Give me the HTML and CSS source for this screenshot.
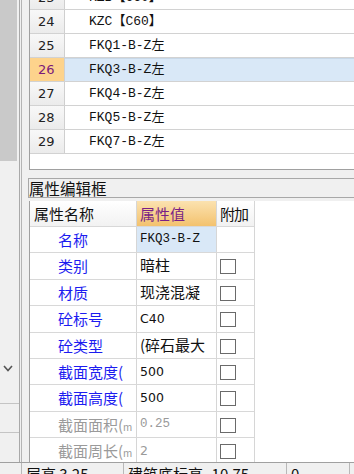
FILE: index.html
```html
<!DOCTYPE html>
<html lang="zh">
<head>
<meta charset="utf-8">
<link rel="stylesheet" href="styles.css">
</head>
<body>
<div class="app">
  <div class="top">
    <aside class="sidebar">
      <div class="side-top"></div>
      <div class="side-mid">
        <svg class="chev" width="10" height="7" viewBox="0 0 10 7"><polyline points="1,1 5,5.5 9,1" fill="none" stroke="#555" stroke-width="1.6"/></svg>
      </div>
      <div class="side-btn"></div>
      <div class="side-btn"></div>
    </aside>
    <main class="main">
      <div class="list">
        <div class="lrow"><span class="num">23</span><span class="cell">KZB【C60】</span></div>
        <div class="lrow"><span class="num">24</span><span class="cell">KZC【C60】</span></div>
        <div class="lrow"><span class="num">25</span><span class="cell">FKQ1-B-Z左</span></div>
        <div class="lrow sel"><span class="num">26</span><span class="cell">FKQ3-B-Z左</span></div>
        <div class="lrow"><span class="num">27</span><span class="cell">FKQ4-B-Z左</span></div>
        <div class="lrow"><span class="num">28</span><span class="cell">FKQ5-B-Z左</span></div>
        <div class="lrow"><span class="num">29</span><span class="cell">FKQ7-B-Z左</span></div>
        <div class="lfill"><span class="num"></span><span class="cell"></span></div>
      </div>
      <div class="title">属性编辑框</div>
      <div class="props">
        <div class="ptable">
          <div class="prow head">
            <span class="pname">属性名称</span>
            <span class="pval">属性值</span>
            <span class="padd">附加</span>
          </div>
          <div class="prow">
            <span class="pname blue">名称</span>
            <span class="pval mono selv">FKQ3-B-Z</span>
            <span class="padd"></span>
          </div>
          <div class="prow">
            <span class="pname blue">类别</span>
            <span class="pval">暗柱</span>
            <span class="padd"><i class="cb"></i></span>
          </div>
          <div class="prow">
            <span class="pname blue">材质</span>
            <span class="pval">现浇混凝</span>
            <span class="padd"><i class="cb"></i></span>
          </div>
          <div class="prow">
            <span class="pname blue">砼标号</span>
            <span class="pval sans">C40</span>
            <span class="padd"><i class="cb"></i></span>
          </div>
          <div class="prow">
            <span class="pname blue">砼类型</span>
            <span class="pval">(碎石最大</span>
            <span class="padd"><i class="cb"></i></span>
          </div>
          <div class="prow">
            <span class="pname blue">截面宽度(</span>
            <span class="pval sans">500</span>
            <span class="padd"><i class="cb"></i></span>
          </div>
          <div class="prow">
            <span class="pname blue">截面高度(</span>
            <span class="pval sans">500</span>
            <span class="padd"><i class="cb"></i></span>
          </div>
          <div class="prow">
            <span class="pname grey">截面面积(<small>m</small></span>
            <span class="pval mono grey">0.25</span>
            <span class="padd"><i class="cb"></i></span>
          </div>
          <div class="prow">
            <span class="pname grey">截面周长(<small>m</small></span>
            <span class="pval sans grey">2</span>
            <span class="padd"><i class="cb"></i></span>
          </div>
        </div>
      </div>
    </main>
  </div>
  <footer class="status">
    <span class="sitem s0"></span>
    <span class="sitem s1">层高 3.25</span>
    <span class="sitem s2">建筑底标高 -10.75</span>
    <span class="sitem s3">0</span>
  </footer>
</div>
</body>
</html>
```
FILE: styles.css
```css
* { box-sizing: border-box; }
html, body {
  margin: 0;
  padding: 0;
  width: 354px;
  height: 474px;
  overflow: hidden;
  background: #f0f0f0;
  font-family: "Noto Sans CJK SC", "Liberation Sans", sans-serif;
}
.app {
  display: flex;
  flex-direction: column;
  height: 474px;
}
.top {
  display: flex;
  height: 462px;
}
.sidebar {
  width: 20px;
  flex: none;
  display: flex;
  flex-direction: column;
  border-right: 1px solid #a9a9a9;
  background: #f0f0f0;
}
.side-top {
  height: 161px;
  width: 17px;
  background: #c9c9c9;
}
.side-mid {
  flex: 1;
  display: flex;
  align-items: flex-start;
  padding-top: 204px;
  padding-left: 3px;
  border-bottom: 1px solid #c4c4c4;
}
.chev { display: block; }
.side-btn {
  height: 29px;
  border-bottom: 1px solid #c4c4c4;
}
.side-btn:last-child { border-bottom: none; }
.main {
  flex: 1;
  min-width: 0;
  margin-left: 1px;
  border-left: 1px solid #b4b4b4;
  padding-left: 7px;
  display: flex;
  flex-direction: column;
}
.list {
  margin-top: -14px;
  border-left: 1px solid #a0a0a0;
  border-bottom: 1px solid #a0a0a0;
  background: #fff;
  flex: none;
}
.lrow, .lfill {
  display: flex;
  height: 24px;
  border-bottom: 1px solid #d2d2d2;
}
.lfill { height: 15px; border-bottom: none; }
.num {
  width: 35px;
  flex: none;
  background: linear-gradient(#f8f8f8, #ebebeb);
  border-right: 1px solid #cfcfcf;
  font-family: "DejaVu Sans", sans-serif;
  font-size: 13px;
  line-height: 23px;
  color: #222;
  padding-left: 8px;
}
.lfill .num { background: #fff; border-right: none; }
.cell {
  flex: 1;
  padding-left: 24px;
  font-family: "Liberation Mono", "Noto Sans CJK SC", monospace;
  font-size: 13px;
  line-height: 24px;
  color: #111;
  white-space: nowrap;
}
.lrow.sel { background: #d9e8f7; }
.lrow.sel .cell { background: #d9e8f7; border-top: 1px solid #c8d8e8; line-height: 22px; }
.lrow.sel .num { background: #fdd38c; color: #7a1a7a; }
.title {
  margin-top: 8px;
  margin-left: -1px;
  height: 20px;
  border-top: 1px solid #a8a8a8;
  border-bottom: 1px solid #a8a8a8;
  border-left: 1px solid #a8a8a8;
  background: #f0f0f0;
  font-size: 15.5px;
  line-height: 18px;
  color: #111;
  white-space: nowrap;
}
.props {
  margin-top: 3px;
  flex: 1;
  background: #fff;
  border-left: 1px solid #a0a0a0;
  overflow: hidden;
}
.ptable {
  width: 225px;
  border-right: 1px solid #d6d6d6;
}
.prow {
  display: flex;
  height: 26.4px;
  border-bottom: 1px solid #d8d8d8;
}
.prow.head { height: 26px; }
.prow span {
  white-space: nowrap;
  overflow: hidden;
}
.pname {
  width: 107px;
  flex: none;
  border-right: 1px solid #d6d6d6;
  padding-left: 28px;
  font-size: 15px;
  line-height: 25px;
}
.pname small { font-size: 10px; }
.pval {
  width: 80px;
  flex: none;
  border-right: 1px solid #d6d6d6;
  padding-left: 3px;
  font-size: 15px;
  line-height: 24px;
  color: #111;
}
.padd {
  flex: 1;
  padding-left: 3px;
  padding-top: 6px;
  font-size: 15px;
}
.head .pname {
  padding-left: 4px;
  background: linear-gradient(#ffffff, #f2f2f2);
  color: #111;
}
.head .pval {
  background: linear-gradient(#fbe2b0, #f3c26e);
  color: #7a1f86;
  line-height: 25px;
}
.head .padd {
  background: linear-gradient(#ffffff, #f2f2f2);
  padding-top: 0;
  line-height: 25px;
  letter-spacing: -1px;
  color: #111;
}
.blue { color: #1c1cf0; }
.grey { color: #9a9a9a; }
.pname.grey { color: #9a9a9a; }
.mono {
  font-family: "Liberation Mono", "Noto Sans CJK SC", monospace;
  font-size: 12.5px;
}
.sans {
  font-family: "DejaVu Sans", sans-serif;
  font-size: 12.5px;
  line-height: 26px;
}
.selv { background: #d9e8f7; }
.cb {
  display: block;
  width: 16px;
  height: 15px;
  border: 1px solid #6a6a6a;
  background: #fff;
}
.status {
  height: 12px;
  flex: none;
  display: flex;
  border-top: 1px solid #a0a0a0;
  background: #f0f0f0;
  overflow: hidden;
  font-size: 15px;
  line-height: 22px;
  color: #111;
}
.sitem {
  border-right: 1px solid #b8b8b8;
  white-space: nowrap;
  overflow: hidden;
  padding-left: 4px;
}
.s0 { width: 22px; padding-left: 0; }
.s1 { width: 102px; }
.s2 { width: 163px; }
.s3 { width: 63px; }
```
